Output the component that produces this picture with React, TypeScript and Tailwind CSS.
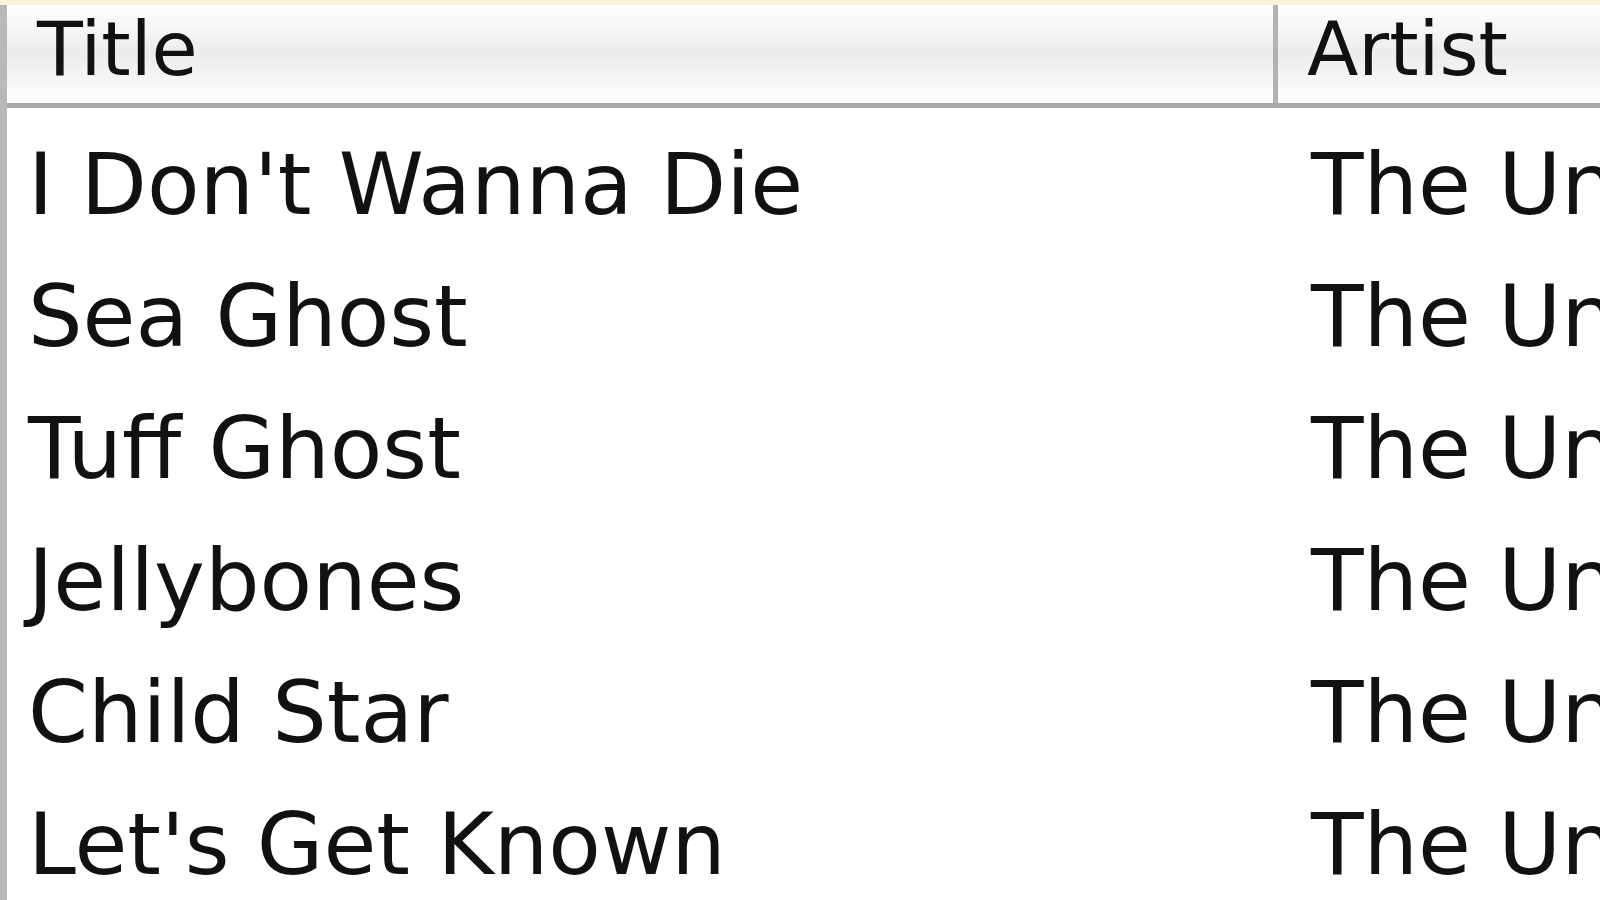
const rows = [
  "I Don't Wanna Die",
  "Sea Ghost",
  "Tuff Ghost",
  "Jellybones",
  "Child Star",
  "Let's Get Known",
];

export default function App() {
  return (
    <div
      className="w-[1600px] h-[900px] overflow-hidden bg-white flex flex-col text-[#111]"
      style={{ fontFamily: '"DejaVu Sans", "Noto Sans", sans-serif' }}
    >
      {/* window top edge */}
      <div className="h-[5px] bg-[#fcf4d8] shrink-0" />

      <div className="flex-1 flex flex-col border-l-[7px] border-[#b9b9b9]">
        {/* column header */}
        <div className="grid grid-cols-[1271px_1fr] h-[103px] shrink-0 border-b-[5px] border-[#a9a9a9] bg-gradient-to-b from-white via-[#ececec] to-white">
          <div className="flex items-center pl-[30px] pb-[10px] text-[75px] leading-none border-r-[5px] border-[#b3b3b3]">
            Title
          </div>
          <div className="flex items-center pl-[29px] pb-[10px] text-[75px] leading-none">
            Artist
          </div>
        </div>

        {/* track list */}
        <div className="flex flex-col">
          {rows.map((title) => (
            <div key={title} className="grid grid-cols-[1271px_1fr] h-[132px] items-start">
              <div className="pl-[21px] pt-[33px] text-[86px] leading-none whitespace-nowrap">
                {title}
              </div>
              <div className="pl-[33px] pt-[33px] text-[86px] leading-none whitespace-nowrap">
                The Unicorns
              </div>
            </div>
          ))}
        </div>
      </div>
    </div>
  );
}
